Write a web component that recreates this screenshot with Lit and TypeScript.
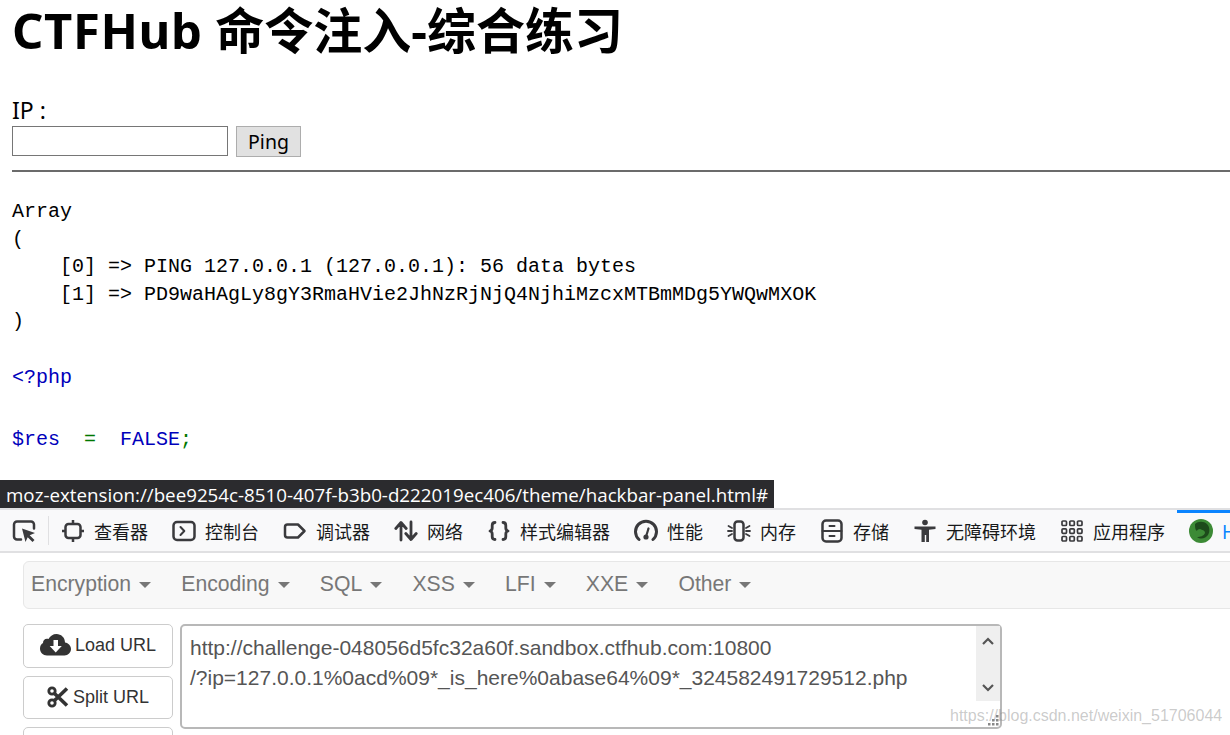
import { LitElement, html, css, svg } from "lit";
import { customElement } from "lit/decorators.js";

const ic = (body: unknown) => html`<svg class="ico" viewBox="0 0 24 24" fill="none" stroke="#3a3a3d" stroke-width="2.500" stroke-linecap="round" stroke-linejoin="round">${body}</svg>`;

const tabs = [
  { label: "查看器", icon: svg`<rect x="4.500" y="5" width="15" height="14" rx="3"/><path stroke-linecap="butt" d="M12 1v4M12 19v4M1 12h3.500M19.500 12H23"/>` },
  { label: "控制台", icon: svg`<rect x="1.500" y="3" width="21" height="18" rx="3.500"/><path stroke-width="2" d="M8.500 8l3.800 4-3.800 4"/>` },
  { label: "调试器", icon: svg`<path d="M4.500 5.500h10.500l6.500 6.500-6.500 6.500H4.500a2.500 2.500 0 0 1-2.500-2.500V8a2.500 2.500 0 0 1 2.500-2.500z"/>` },
  { label: "网络", icon: svg`<path stroke-width="2.800" d="M7 21V4M1.800 9.500L7 3.500l5.200 6M17 3v17M11.800 14.500l5.200 6 5.200-6"/>` },
  { label: "样式编辑器", icon: svg`<path stroke-width="2.800" d="M8 3.500c-2.500 0-2.800 1.300-2.800 3v2.500c0 1.500-.6 2.500-2.200 3 1.600.5 2.200 1.500 2.200 3v2.500c0 1.700.3 3 2.800 3M16 3.500c2.500 0 2.800 1.300 2.800 3v2.500c0 1.500.6 2.500 2.200 3-1.600.5-2.200 1.500-2.200 3v2.500c0 1.700-.3 3-2.800 3"/>` },
  { label: "性能", icon: svg`<path stroke-width="3" d="M5 20.500A10.500 10.500 0 1 1 19 20.500"/><path stroke-width="2.200" d="M14.500 9.500L12.500 16"/><circle cx="12" cy="18" r="2.600" fill="#3a3a3d" stroke="none"/>` },
  { label: "内存", icon: svg`<rect x="7.500" y="2.500" width="9" height="19" rx="3"/><path stroke-width="1.800" d="M1.500 7l3.500 2M1 12h4M1.500 17l3.500-2M22.500 7l-3.500 2M23 12h-4M22.500 17l-3.500-2"/>` },
  { label: "存储", icon: svg`<rect x="2.500" y="1.500" width="19" height="21" rx="3.500"/><path stroke-width="2" d="M2.500 12h19M9.500 7h5M9.500 17h5"/>` },
  { label: "无障碍环境", icon: svg`<circle cx="12" cy="3.500" r="2.800" fill="#3a3a3d" stroke="none"/><path stroke="none" fill="#3a3a3d" d="M1.500 7.500h21v2.500l-6.500.8V23h-2.800v-7h-1.400v7H8.500V10.800L1.500 10z"/>` },
  { label: "应用程序", icon: svg`<g stroke-width="1.700"><rect x="2" y="2" width="4.500" height="4.500" rx="1"/><rect x="9.800" y="2" width="4.500" height="4.500" rx="1"/><rect x="17.500" y="2" width="4.500" height="4.500" rx="1"/><rect x="2" y="9.800" width="4.500" height="4.500" rx="1"/><rect x="9.800" y="9.800" width="4.500" height="4.500" rx="1"/><rect x="17.500" y="9.800" width="4.500" height="4.500" rx="1"/><rect x="2" y="17.500" width="4.500" height="4.500" rx="1"/><rect x="9.800" y="17.500" width="4.500" height="4.500" rx="1"/><rect x="17.500" y="17.500" width="4.500" height="4.500" rx="1"/></g>` },
];

const menus = ["Encryption", "Encoding", "SQL", "XSS", "LFI", "XXE", "Other"];

@customElement("app-root")
export class AppRoot extends LitElement {
  static styles = css`
    :host { display: flex; flex-direction: column; width: 1230px; height: 735px; overflow: hidden; background: #fff; position: relative; }
    .page { height: 508px; flex: none; padding-left: 12px; position: relative; color: #000; }
    h1 { margin: 0; height: 62px; font: 700 49px/61px "Noto Sans", "Noto Sans CJK SC", sans-serif; white-space: nowrap; }
    .latin { letter-spacing: .6px; }
    .ip { margin-top: 32px; height: 32px; font: 23px/32px "Noto Sans", sans-serif; }
    .form { display: flex; gap: 8px; align-items: flex-start; }
    .field { width: 216px; height: 30px; box-sizing: border-box; border: 1px solid #767676; background: #fff; }
    .ping { width: 65px; height: 31px; box-sizing: border-box; border: 1px solid #adadad; background: #e1e1e1; font: 19.500px/29px "Noto Sans", sans-serif; text-align: center; color: #000; }
    .rule { height: 2px; background: #6b6b6b; margin-top: 13px; }
    pre { margin: 26px 0 0; font: 20px/27.600px "Liberation Mono", monospace; color: #000; }
    .gap1 { height: 28px; }
    .gap2 { height: 34px; }
    .php { color: #0000bb; }
    .op { color: #007700; }
    .status { position: absolute; left: 0; bottom: 0; height: 28px; background: #2b2b2e; color: #fff; padding: 0 6px; font: 18.750px/30px "Open Sans", sans-serif; white-space: nowrap; }
    .toolbar { flex: none; height: 45px; box-sizing: border-box; display: flex; background: #f9f9fa; border-top: 2px solid #e0e0e2; border-bottom: 2px solid #e0e0e2; white-space: nowrap; overflow: hidden; }
    .pick { flex: none; padding: 0 12px; display: flex; align-items: center; border-right: 1px solid #e0e0e2; margin: 6px 0; }
    .tab { flex: none; display: flex; align-items: center; gap: 9px; padding: 0 12px; font: 18px/24px "Noto Sans CJK SC", sans-serif; color: #18191a; }
    .ico { width: 24px; height: 24px; flex: none; display: block; }
    .active { color: #0a84ff; box-shadow: inset 0 3px 0 #0a84ff; }
    .panel { flex: 1; position: relative; padding: 8px 0 0 23px; font-family: "Liberation Sans", Arial, sans-serif; overflow: hidden; }
    .nav { height: 48px; box-sizing: border-box; display: flex; align-items: center; gap: 30.200px; padding: 0 0 2px 7px; margin-right: -6px; background: #f8f8f8; border: 1px solid #e7e7e7; border-radius: 6px 0 0 6px; font-size: 21.200px; color: #777; }
    .menu { display: flex; align-items: center; gap: 8px; }
    .caret { width: 0; height: 0; border-left: 6.500px solid transparent; border-right: 6.500px solid transparent; border-top: 6.500px solid #777; margin-top: 2px; }
    .body { display: flex; gap: 7px; margin-top: 15px; align-items: flex-start; }
    .btns { width: 150px; display: flex; flex-direction: column; gap: 8px; flex: none; }
    .btn { height: 43.500px; box-sizing: border-box; border: 1px solid #ccc; border-radius: 5px; display: flex; align-items: center; justify-content: center; gap: 4px; font-size: 18px; color: #333; background: #fff; }
    .url { width: 822px; height: 105px; box-sizing: border-box; border: 2px solid #b8b8b8; border-radius: 5px; display: flex; align-items: flex-start; position: relative; }
    .text { flex: 1; padding: 7px 8px 0 8px; font-size: 21px; line-height: 30px; color: #555; white-space: pre; }
    .bar { width: 24px; height: 75px; background: #efefef; display: flex; flex-direction: column; justify-content: space-between; align-items: center; padding: 11px 0 9px; box-sizing: border-box; }
    .grip { position: absolute; right: 0; bottom: 0; width: 14px; height: 14px; }
    .mark { position: absolute; left: 950px; top: 154px; font-size: 16px; color: rgba(130,130,130,.42); white-space: nowrap; }
  `;

  render() {
    return html`
      <section class="page">
        <h1><span class="latin">CTFHub</span> 命令注入-综合练习</h1>
        <div class="ip">IP :</div>
        <div class="form"><div class="field"></div><div class="ping">Ping</div></div>
        <div class="rule"></div>
        <pre>Array
(
    [0] =&gt; PING 127.0.0.1 (127.0.0.1): 56 data bytes
    [1] =&gt; PD9waHAgLy8gY3RmaHVie2JhNzRjNjQ4NjhiMzcxMTBmMDg5YWQwMXOK
)
<div class="gap1"></div><span class="php">&lt;?php</span>
<div class="gap2"></div><span class="php">$res</span>  <span class="op">=</span>  <span class="php">FALSE</span><span class="op">;</span></pre>
        <div class="status">moz-extension://bee9254c-8510-407f-b3b0-d222019ec406/theme/hackbar-panel.html#</div>
      </section>
      <nav class="toolbar">
        <div class="pick">
          ${ic(svg`<path d="M9 20.500H5a3 3 0 0 1-3-3v-12a3 3 0 0 1 3-3h14a3 3 0 0 1 3 3v4"/><path stroke="none" fill="#3a3a3d" d="M10 9.500l13 4.500-5.300 2.200 4.800 4.800-2 2-4.800-4.800L13.500 23z"/>`)}
        </div>
        ${tabs.map((t) => html`<div class="tab">${ic(t.icon)}<span>${t.label}</span></div>`)}
        <div class="tab active">
          <svg class="ico" viewBox="0 0 24 24"><circle cx="12" cy="12" r="12" fill="#3c8a35"/><path fill="#1d4a1b" d="M6 5c3-3 9-3 12 0 3 3 3 8 1 11-2 3-7 5-11 2 3 0 7-1 8-4 0-3-3-3-5-4-2 0-3 1-3 2-2-1-2-4-2-7z"/></svg>
          <span>HackBar</span>
        </div>
      </nav>
      <section class="panel">
        <div class="nav">
          ${menus.map((m) => html`<div class="menu"><span>${m}</span><i class="caret"></i></div>`)}
        </div>
        <div class="body">
          <div class="btns">
            <div class="btn">
              <svg width="31" height="24" viewBox="0 1 31 24"><path fill="#333" d="M25 9.500C25 4.500 21 1 16.500 1 13 1 10 3 8.500 6 8 6 7.500 5.800 7 5.800 4.500 5.800 3 7.700 3 10 1 11.200 0 13.200 0 15.500 0 19.500 3 22.500 7 22.500h17.500c3.600 0 6.500-3 6.500-6.500 0-3.200-2.500-6-6-6.500z"/><path fill="#fff" d="M13.500 7h4.500v6h3.800L15.700 19.500 9.700 13h3.800z"/></svg>
              <span>Load URL</span>
            </div>
            <div class="btn">
              <svg width="22" height="22" viewBox="0 0 22 22" fill="none" stroke="#333"><circle cx="5" cy="5" r="3.200" stroke-width="2.800"/><circle cx="5" cy="17" r="3.200" stroke-width="2.800"/><path stroke-width="3.600" d="M7.500 7.500L20 19.500M7.500 14.500L20 2.500"/></svg>
              <span>Split URL</span>
            </div>
            <div class="btn"></div>
          </div>
          <div class="url">
            <div class="text">http://challenge-048056d5fc32a60f.sandbox.ctfhub.com:10800
/?ip=127.0.0.1%0acd%09*_is_here%0abase64%09*_324582491729512.php</div>
            <div class="bar">
              <svg width="12" height="8" viewBox="0 0 12 8" fill="none" stroke="#555" stroke-width="2.200"><path d="M1 7l5-5 5 5"/></svg>
              <svg width="12" height="8" viewBox="0 0 12 8" fill="none" stroke="#555" stroke-width="2.200"><path d="M1 1l5 5 5-5"/></svg>
            </div>
            <svg class="grip" viewBox="0 0 14 14" fill="#888"><rect x="10" y="2" width="2.500" height="2.500"/><rect x="6" y="6" width="2.500" height="2.500"/><rect x="10" y="6" width="2.500" height="2.500"/><rect x="2" y="10" width="2.500" height="2.500"/><rect x="6" y="10" width="2.500" height="2.500"/><rect x="10" y="10" width="2.500" height="2.500"/></svg>
          </div>
        </div>
        <div class="mark">https://blog.csdn.net/weixin_51706044</div>
      </section>
    `;
  }
}
